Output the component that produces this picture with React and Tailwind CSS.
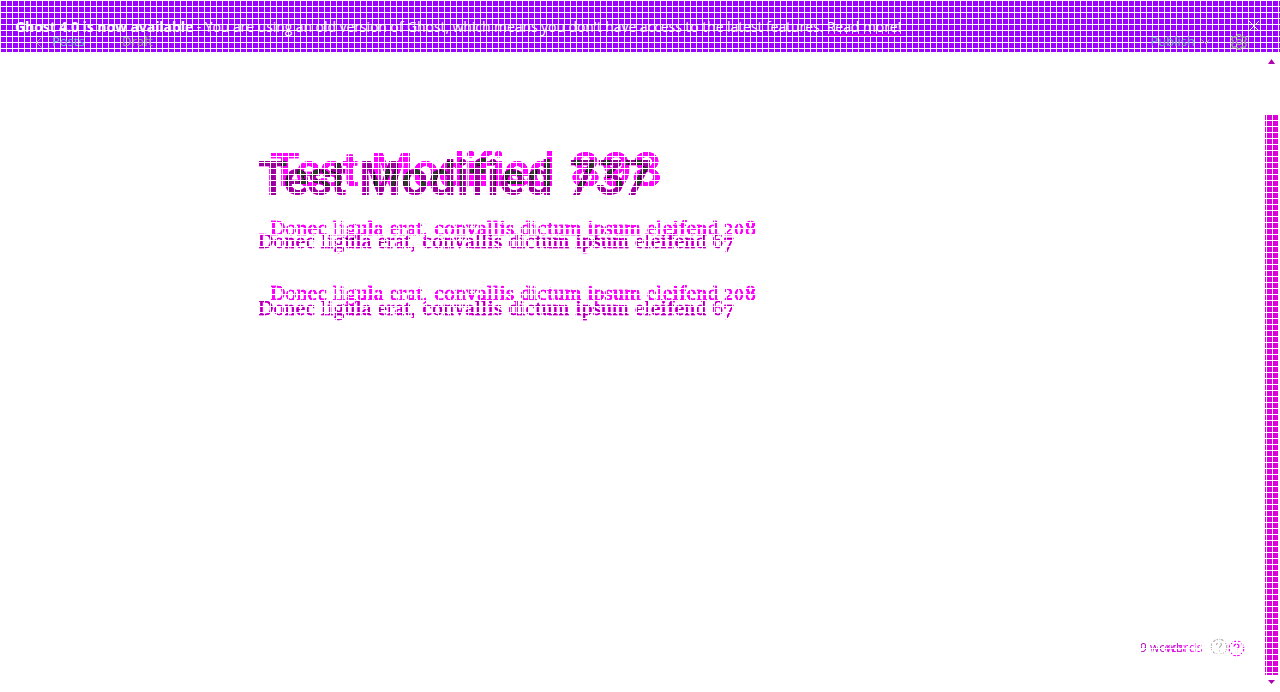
function OldStyleNumber({ value }) {
  return value === "208" ? (
    <span className="tracking-[2px]"><span className="text-[17px]">20</span>8</span>
  ) : (
    <span>6<span className="align-[-4px] leading-none">7</span></span>
  );
}

function Revision({ count, number, tone, layout, titleStyle, countStyle, first, second }) {
  return (
    <article className={`${tone} ${layout} absolute left-0 top-0 flex flex-col items-start mix-blend-difference whitespace-nowrap`}>
      <h1 className="flex h-[56px] items-baseline font-['Roboto',sans-serif] text-[48px] leading-[56px] font-semibold">
        <span className="w-[101px] shrink-0 tracking-[-1.8px]">Test </span>
        <span className={`${titleStyle} shrink-0`}>Modified </span>
        <span className={`${countStyle} font-['Inter',sans-serif] text-[48px] font-semibold [font-feature-settings:'cv09','tnum']`}>{count}</span>
      </h1>
      <p className={`${first} font-['Liberation_Serif',serif] text-[21px] leading-[28px] tracking-[0.49px] [-webkit-text-stroke:0.4px]`}>
        Donec ligula erat, convallis dictum ipsum eleifend <OldStyleNumber value={number} />
      </p>
      <p className={`${second} font-['Liberation_Serif',serif] text-[21px] leading-[28px] tracking-[0.49px] [-webkit-text-stroke:0.4px]`}>
        Donec ligula erat, convallis dictum ipsum eleifend <OldStyleNumber value={number} />
      </p>
    </article>
  );
}

function HelpIcon({ className }) {
  return (
    <svg className={className} viewBox="0 0 18 18" fill="none" stroke="currentColor" strokeWidth="1.3">
      <circle cx="9" cy="9" r="7.7" strokeDasharray="3 1.2" />
      <path d="M6.5 7c0-3.5 5-3.5 5-.5 0 2-2.5 2-2.5 4M9 12v1.5" />
    </svg>
  );
}

export default function App() {
  return (
    <div className="relative flex h-[692px] w-[1280px] flex-col overflow-hidden bg-white font-['Open_Sans',sans-serif]">
      <header className="relative h-[52px] shrink-0 bg-[#9c00ff]">
        <div className="absolute inset-0 bg-[linear-gradient(to_right,white_1px,transparent_1px),linear-gradient(to_bottom,white_1px,transparent_1px)] bg-[size:6px_6px]" />
        <nav className="absolute inset-x-0 top-[32px] flex h-5 items-center pl-[36px] pr-[33px] font-['Open_Sans',sans-serif] text-[13px] font-medium text-[#9fa09a]">
          <svg className="mr-[10px] h-[11px] w-[6px]" viewBox="0 0 6 11" fill="none" stroke="currentColor"><path d="M5.5.5l-5 5 5 5" /></svg>
          <span className="w-[70px] text-[#70b4d4]">Posts</span>
          <span>Draft</span>
          <span className="ml-auto text-[13px] text-[#74a9c4]">Publish</span>
          <svg className="ml-[6px] mr-[21px] h-[6px] w-[9px]" viewBox="0 0 9 6" fill="none" stroke="currentColor"><path d="M.5.5l4 4 4-4" /></svg>
          <svg className="h-4 w-4" viewBox="0 0 24 24" fill="none" stroke="currentColor" strokeWidth="2"><circle cx="12" cy="12" r="4" /><path d="M10 1h4l1 3 3 1 3-1 2 4-2 2v4l2 2-2 4-3-1-3 1-1 3h-4l-1-3-3-1-3 1-2-4 2-2v-4L1 8l2-4 3 1 3-1z" /></svg>
        </nav>
        <div className="relative flex h-[52px] items-center pl-[15px] pr-5 text-[14px] text-white">
          <p className="whitespace-nowrap tracking-[-0.07px]">
            <b className="text-white">Ghost 4.0 is now available</b> - You are using an old version of Ghost, which means you don't have access to the latest features. <span className="underline decoration-[#c800f0] decoration-2 underline-offset-2">Read more!</span>
          </p>
          <svg className="ml-auto h-3 w-3" viewBox="0 0 12 12" fill="none" stroke="white" strokeWidth="1"><path d="M1 1l10 10M11 1L1 11" /></svg>
        </div>
      </header>
      <div className="flex h-[640px]">
        <main className="relative isolate w-[1265px] bg-white">
          <Revision count="898" number="208" tone="text-[#63cc63]" layout="pl-[270px] pt-[90px]" titleStyle="w-[199px] tracking-[-0.9px]" countStyle="tracking-[-0.4px]" first="mt-[16px]" second="mt-[35px]" />
          <Revision count="737" number="67" tone="text-[#b3ccb3]" layout="pl-[258px] pt-[98px]" titleStyle="w-[208px] tracking-[0.4px]" countStyle="tracking-[-3.3px]" first="mt-[21px]" second="mt-[38px]" />
          <div className="absolute inset-0 bg-[#ff82ff] mix-blend-color-burn" />
          <div className="absolute inset-0 bg-[#800080] mix-blend-color-dodge" />
          <footer className="absolute right-[20px] top-[585px] flex h-[22px] items-center text-xs">
            <span className="w-[70px] whitespace-nowrap text-[#b800c0]">9 words</span>
            <span className="absolute left-[26px] text-[#f000f0] tracking-[0.5px]">words</span>
            <HelpIcon className="mt-[-3px] h-[18px] w-[18px] text-[#b5b5b5]" />
            <HelpIcon className="h-[17px] w-[17px] text-[#ff00ff]" />
          </footer>
          <div className="absolute inset-0 bg-[linear-gradient(to_right,white_1px,transparent_1px),linear-gradient(to_bottom,white_1px,transparent_1px)] bg-[size:6px_6px] bg-[position:0_2px]" />
        </main>
        <aside className="flex w-[15px] flex-col items-start">
          <svg className="ml-[3px] mt-[7px] h-[5px] w-[7px] shrink-0" viewBox="0 0 7 5"><path d="M3.5 0L7 5H0z" fill="#b000b0" /></svg>
          <div className="mt-[51px] h-[560px] w-[14px] shrink-0 bg-[#dc00dc] bg-[linear-gradient(to_right,white_1px,transparent_1px),linear-gradient(to_bottom,white_1px,transparent_1px)] bg-[size:6px_6px] bg-[position:1px_5px]" />
          <svg className="ml-[3px] mt-[5px] h-[4px] w-[7px] shrink-0" viewBox="0 0 7 4"><path d="M0 0h7L3.5 4z" fill="#b000b0" /></svg>
        </aside>
      </div>
    </div>
  );
}
